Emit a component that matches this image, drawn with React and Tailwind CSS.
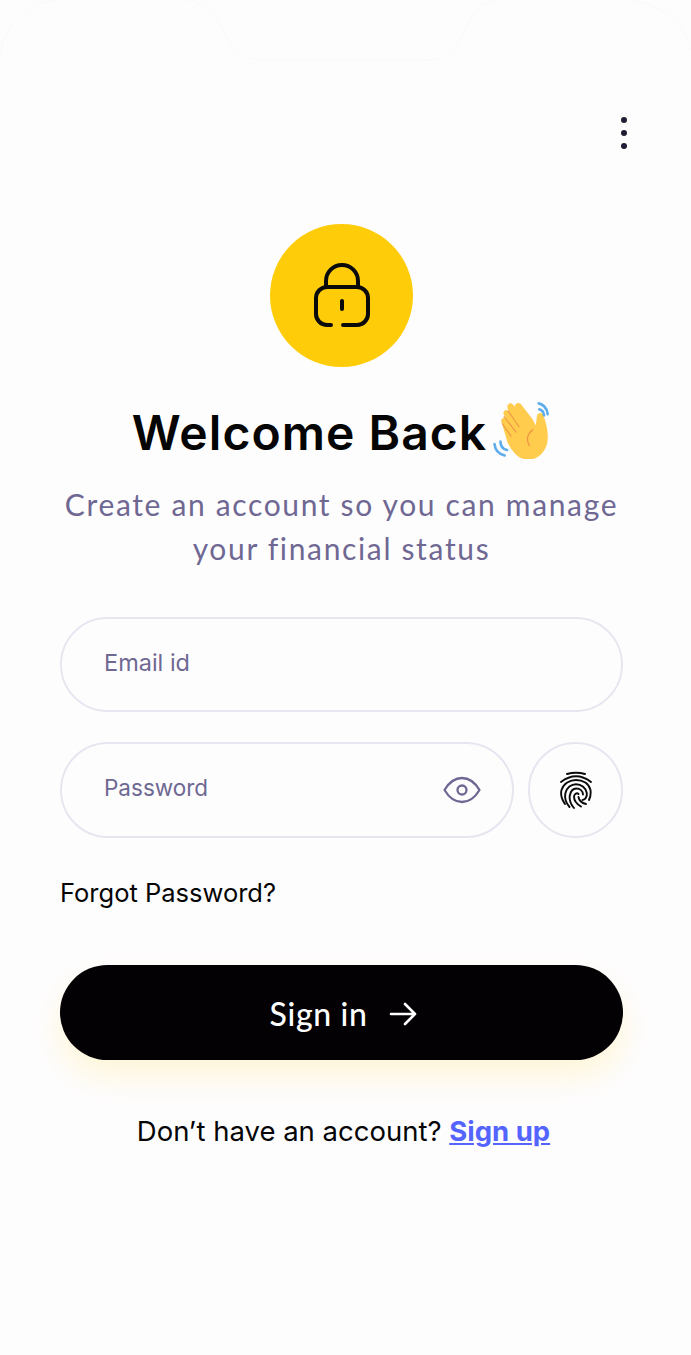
import React from 'react';

const LockIcon = () => (
    <svg width="60" height="68" viewBox="0 0 60 68" fill="none" stroke="#0a0a0a" strokeWidth="4" strokeLinecap="round">
        <path d="M19 63H15a11 11 0 0 1-11-11V36a11 11 0 0 1 11-11H45a11 11 0 0 1 11 11V52a11 11 0 0 1-11 11H31" />
        <path d="M14 25V19a16 16 0 0 1 32 0V25" />
        <path d="M30 39V47" />
    </svg>
);

// Waving hand, drawn by hand since there is no emoji font to rely on
const WaveIcon = () => (
    <svg width="58" height="58" viewBox="2 2 48 48.500" fill="none">
        <path
            d="M9 20c-1.500-2 1-5 3.500-3.500L11 14c-2-3 1.500-6 4-3.500L14 8c-1.500-3 2.500-5.500 4.500-3l1.500 2c-.5-3 3-4.500 5-2.500l10 13 2.500 5 1-8c.5-3 4.500-3.500 5.500-.5 1.500 5 4 12 3.500 20-.5 10-8 17-16 17-8.500 0-13-6-17.500-14L9 20z"
            fill="#FFCC4D"
        />
        <path d="M14.500 10.500l9 13M11 15l10 13M9.500 21l7.500 10.500" stroke="#EF9645" strokeWidth="0.9" strokeLinecap="round" />
        <path d="M35 26c-5 4-5.500 9-3 13" stroke="#EF9645" strokeWidth="1.200" strokeLinecap="round" />
        <path d="M40 4c3 .5 7 3.500 7.500 9" stroke="#5DADEC" strokeWidth="2.200" strokeLinecap="round" />
        <path d="M40.500 9c2 .5 3.500 2 4 5" stroke="#5DADEC" strokeWidth="2.200" strokeLinecap="round" />
        <path d="M3 38c.5 5 3 8 8.500 9.500" stroke="#5DADEC" strokeWidth="2.200" strokeLinecap="round" />
        <path d="M8 36c0 3.500 1.500 6 5.500 7" stroke="#5DADEC" strokeWidth="2.200" strokeLinecap="round" />
    </svg>
);

const EyeIcon = () => (
    <svg width="38" height="28" viewBox="0 0 38 28" fill="none" stroke="#6e6893" strokeWidth="2.300">
        <path d="M1.500 14C6 6.500 12 2 19 2s13 4.500 17.500 12C32 21.500 26 26 19 26S6 21.500 1.500 14z" strokeLinejoin="round" />
        <circle cx="19" cy="14" r="4.500" />
    </svg>
);

const FingerprintIcon = () => (
    <svg width="34" height="38" viewBox="0 0 34 38" fill="none" stroke="#0a0a0a" strokeWidth="1.900" strokeLinecap="round">
        <path d="M8 3Q17 .5 26 3" />
        <path d="M2 11Q17 -.5 32 11" />
        <path d="M6 33C2.500 28 1.500 23 2.500 19 4.500 12.500 11 9 17 9 24 9 30 12.500 31.500 19 32 23 31.500 26 30 29" />
        <path d="M10.500 36C7 32 5.500 27 6.300 22.500 7.500 16.500 12.500 13.200 17 13.200 22.500 13.200 27 17 27.800 22 28.200 25.500 26.500 29 23.500 29" />
        <path d="M15 37C12 33.500 10.300 29 10.700 25 11.500 20.500 14 17.500 17.300 17.500 21 17.500 23.800 20 24 23.500" />
        <path d="M19.500 23C18 21.500 15.500 22.500 15 25.500 15 30 18.500 33.500 22 35.500" />
        <path d="M19.500 26C20 29 22.500 32 27 33" />
    </svg>
);

const ArrowIcon = () => (
    <svg width="28" height="24" viewBox="0 0 28 24" fill="none" stroke="#ffffff" strokeWidth="2.600" strokeLinecap="round" strokeLinejoin="round">
        <path d="M2 12H26M16 2L26 12L16 22" />
    </svg>
);

const App = () => {
    return (
        <div className="relative w-full h-[1355px] overflow-hidden bg-[#fefdfe] pl-[60px] pr-[68px] font-['Inter',sans-serif]">
            {/* Faint status bar notch behind the page */}
            <svg className="absolute top-0 left-0" width="691" height="70" viewBox="0 0 691 70" fill="none" stroke="#fafafa">
                <path d="M0 55C5 25 25 1 60 0H190C215 8 222 30 232 45C240 57 250 60 265 60H425C445 60 455 52 465 30C472 12 480 4 495 0H630C665 5 685 25 691 50" />
            </svg>

            {/* Menu */}
            <div className="relative flex justify-end pt-[117px]">
                <div className="flex flex-col gap-[7px] mr-[-4px]">
                    <span className="block w-[6px] h-[6px] rounded-full bg-[#1f1d33]" />
                    <span className="block w-[6px] h-[6px] rounded-full bg-[#1f1d33]" />
                    <span className="block w-[6px] h-[6px] rounded-full bg-[#1f1d33]" />
                </div>
            </div>

            {/* Header */}
            <div className="relative flex flex-col items-center mt-[75px]">
                <div className="w-[143px] h-[143px] rounded-full bg-[#ffcc0a] flex items-center justify-center">
                    <LockIcon />
                </div>
                <div className="flex items-center h-[60px] mt-[36px]">
                    <h1 className="text-[48px] leading-[60px] font-semibold tracking-[0.022em] text-[#050505] whitespace-nowrap">
                        Welcome Back
                    </h1>
                    <div className="ml-[6px] mt-[-6px]">
                        <WaveIcon />
                    </div>
                </div>
                <p className="mt-[19px] text-center text-[30px] leading-[44px] tracking-[0.055em] whitespace-nowrap text-[#6e6893] font-['Lato',sans-serif]">
                    Create an account so you can manage
                    <br />
                    your financial status
                </p>
            </div>

            {/* Form */}
            <div className="relative mt-[47px] flex flex-col">
                <div className="h-[95px] rounded-full border-2 border-[#e6e6f0] flex items-center pl-[42px] pb-[4px] text-[23.500px] text-[#6e6893]">
                    Email id
                </div>
                <div className="flex gap-[14px] mt-[30px]">
                    <div className="flex-1 h-[96px] rounded-full border-2 border-[#e6e6f0] flex items-center justify-between pl-[42px] pr-[31px] text-[22.500px] text-[#6e6893]">
                        <span className="pb-[4px]">Password</span>
                        <EyeIcon />
                    </div>
                    <div className="w-[95px] h-[96px] rounded-full border-2 border-[#e6e6f0] flex items-center justify-center">
                        <FingerprintIcon />
                    </div>
                </div>
                <div className="mt-[37px] text-[25.500px] leading-[36px] text-[#050505]">Forgot Password?</div>
                <button className="mt-[54px] h-[95px] rounded-full bg-[#030104] flex items-center justify-center gap-[22px] pl-[4px] pt-[2px] text-white text-[32px] font-medium font-['Lato',sans-serif] tracking-[0.02em] shadow-[0_16px_32px_rgba(255,204,10,0.16)]">
                    <span>Sign in</span>
                    <ArrowIcon />
                </button>
                <p className="mt-[53px] pl-[4px] text-center text-[27.500px] leading-[36px] text-[#050505]">
                    Don’t have an account?{' '}
                    <a className="font-bold text-[#5465ff] underline">Sign up</a>
                </p>
            </div>
        </div>
    );
};

export default App;
